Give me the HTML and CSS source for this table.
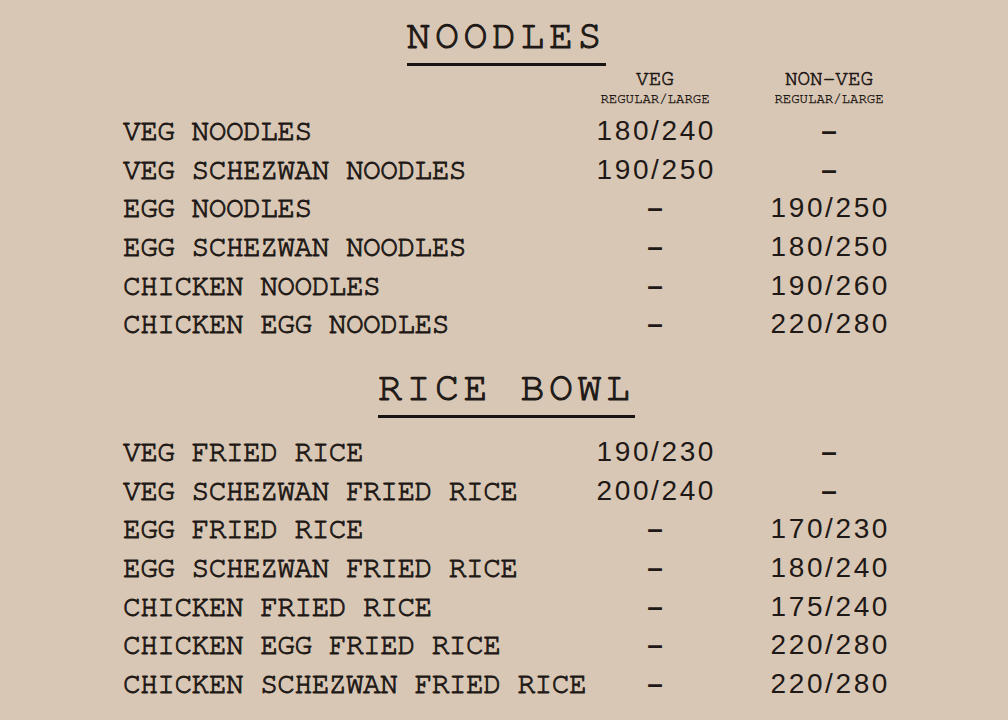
FILE: index.html
```html
<!DOCTYPE html>
<html lang="en">
<head>
<meta charset="utf-8">
<title>Menu</title>
<link rel="stylesheet" href="styles.css">
</head>
<body>
<main class="menu">
  <section class="section noodles">
    <h2 class="title"><span class="title-text">NOODLES</span></h2>
    <div class="row head">
      <span class="name"></span>
      <div class="col-head"><span class="col-main">VEG</span><span class="col-sub">REGULAR/LARGE</span></div>
      <div class="col-head"><span class="col-main">NON-VEG</span><span class="col-sub">REGULAR/LARGE</span></div>
    </div>
    <div class="row"><span class="name">VEG NOODLES</span><span class="price">180/240</span><span class="price dash">–</span></div>
    <div class="row"><span class="name">VEG SCHEZWAN NOODLES</span><span class="price">190/250</span><span class="price dash">–</span></div>
    <div class="row"><span class="name">EGG NOODLES</span><span class="price dash">–</span><span class="price">190/250</span></div>
    <div class="row"><span class="name">EGG SCHEZWAN NOODLES</span><span class="price dash">–</span><span class="price">180/250</span></div>
    <div class="row"><span class="name">CHICKEN NOODLES</span><span class="price dash">–</span><span class="price">190/260</span></div>
    <div class="row"><span class="name">CHICKEN EGG NOODLES</span><span class="price dash">–</span><span class="price">220/280</span></div>
  </section>
  <section class="section rice">
    <h2 class="title"><span class="title-text">RICE BOWL</span></h2>
    <div class="row"><span class="name">VEG FRIED RICE</span><span class="price">190/230</span><span class="price dash">–</span></div>
    <div class="row"><span class="name">VEG SCHEZWAN FRIED RICE</span><span class="price">200/240</span><span class="price dash">–</span></div>
    <div class="row"><span class="name">EGG FRIED RICE</span><span class="price dash">–</span><span class="price">170/230</span></div>
    <div class="row"><span class="name">EGG SCHEZWAN FRIED RICE</span><span class="price dash">–</span><span class="price">180/240</span></div>
    <div class="row"><span class="name">CHICKEN FRIED RICE</span><span class="price dash">–</span><span class="price">175/240</span></div>
    <div class="row"><span class="name">CHICKEN EGG FRIED RICE</span><span class="price dash">–</span><span class="price">220/280</span></div>
    <div class="row"><span class="name">CHICKEN SCHEZWAN FRIED RICE</span><span class="price dash">–</span><span class="price">220/280</span></div>
  </section>
</main>
</body>
</html>
```
FILE: styles.css
```css
html, body {
  margin: 0;
  padding: 0;
  background: #d9c7b5;
}

body {
  width: 1008px;
  height: 720px;
  overflow: hidden;
  color: #1e1916;
  font-family: "FreeMono", "Liberation Mono", monospace;
}

.menu {
  display: flex;
  flex-direction: column;
  padding-top: 12px;
}

.title {
  margin: 0;
  text-align: center;
  font-weight: normal;
  font-size: 40px;
  line-height: 48px;
  letter-spacing: 4.5px;
  -webkit-text-stroke: 1.1px #1e1916;
}

.title-text {
  display: inline-block;
  padding-bottom: 3px;
  border-bottom: 3px solid #1a1512;
  margin-left: 4.5px;
}

.row {
  display: grid;
  grid-template-columns: 445px 174px 174px;
  padding-left: 123px;
  align-items: baseline;
  height: 38.67px;
}

.head {
  height: auto;
  align-items: start;
  margin-top: 1px;
  margin-bottom: 5px;
}

.col-head {
  display: flex;
  flex-direction: column;
  align-items: center;
  -webkit-text-stroke: 0.6px #1e1916;
}

.col-main {
  font-size: 21px;
  line-height: 24px;
}

.col-sub {
  font-size: 14px;
  line-height: 16px;
  -webkit-text-stroke: 0.35px #1e1916;
}

.name {
  font-size: 29.5px;
  line-height: 38.67px;
  letter-spacing: -0.55px;
  white-space: pre;
  -webkit-text-stroke: 0.9px #1e1916;
}

.price {
  text-align: center;
  font-family: "Liberation Sans", Arial, sans-serif;
  font-size: 28px;
  line-height: 38.67px;
  letter-spacing: 2.6px;
  text-indent: 2.6px;
}

.dash {
  font-weight: bold;
}

.rice .title {
  margin-top: 20px;
}

.rice .title + .row {
  margin-top: 15px;
}
```
